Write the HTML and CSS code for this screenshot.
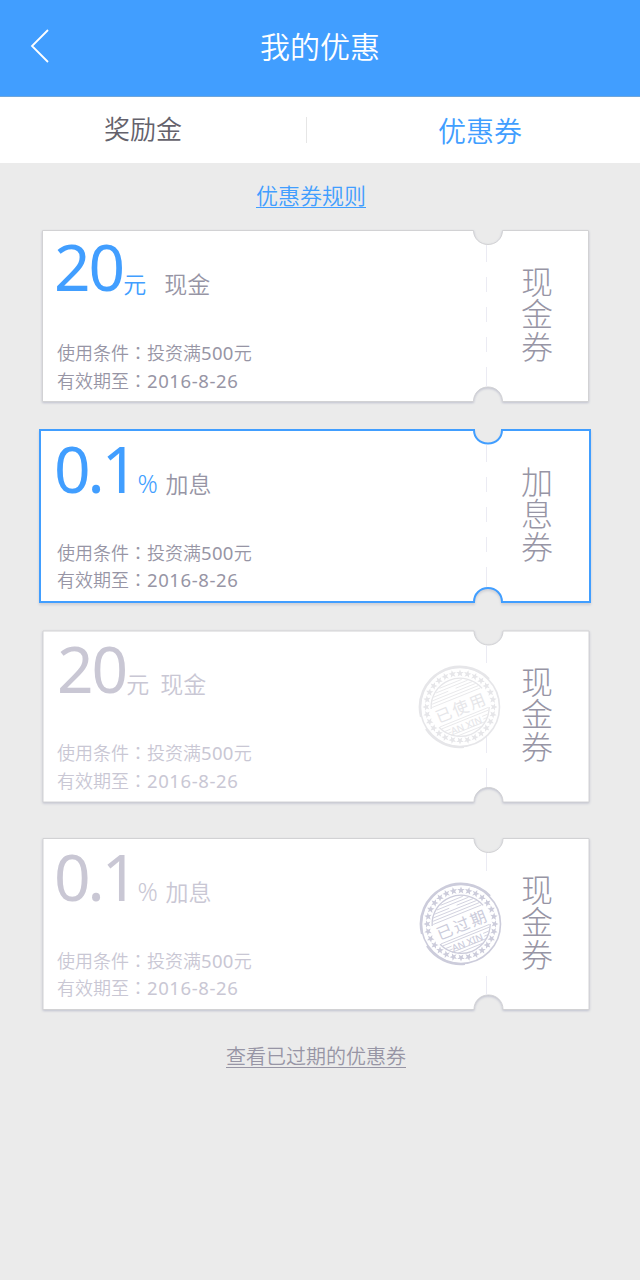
FILE: index.html
```html
<!DOCTYPE html>
<html lang="zh-CN">
<head>
<meta charset="utf-8">
<title>我的优惠</title>
<link rel="stylesheet" href="styles.css">
</head>
<body>
<svg class="defs" width="0" height="0">
  <defs>
    <path id="ticket" d="M6.5 5.500H437.500C437.500 13.500 444 19.500 452 19.500S466.500 13.500 466.500 5.500H552.500V176.500H466.500C466.500 168 460 162 452 162S437.500 168 437.500 176.500H6.500Z"/>
    <path id="star" d="M0-37.600l1 2.500 2.800.1-2.200 1.700.8 2.700-2.400-1.500-2.400 1.500.8-2.700-2.200-1.700 2.800-.1Z"/>
    <g id="star4"><use href="#star"/><use href="#star" transform="rotate(12.857)"/><use href="#star" transform="rotate(25.714)"/><use href="#star" transform="rotate(38.571)"/></g>
    <g id="seal">
      <circle r="39.500" fill="none" stroke="currentColor" stroke-width="1.600"/>
      <path d="M-39 10A40.300 40.300 0 0 1 29-28M-34 22A40.300 40.300 0 0 0 4 40" fill="none" stroke="currentColor" stroke-width="2.200"/>
      <g fill="currentColor"><use href="#star4"/><use href="#star4" transform="rotate(51.429)"/><use href="#star4" transform="rotate(102.857)"/><use href="#star4" transform="rotate(154.286)"/><use href="#star4" transform="rotate(205.714)"/><use href="#star4" transform="rotate(257.143)"/><use href="#star4" transform="rotate(308.571)"/></g>
      <g transform="rotate(-22)" fill="none" stroke="currentColor">
        <path d="M-27.500-9A29 29 0 0 1 27.500-9M-27 11A29 29 0 0 0 27 11" stroke-width="1.300"/>
        <path d="M-26-10H26M-25-13H25M-23.500-16H23.500M-21-19H-5M3-19H21M-17-22H17M-12-25H12M-26 11H26M-25 13.500H25M-23 17H-17M17 17H23M-21 20H-17M17 20H21M-19 23H19M-14 26H14" stroke-width=".8"/>
      </g>
    </g>
  </defs>
</svg>

<header class="topbar">
  <a class="back"><svg width="20" height="34" viewBox="0 0 20 34"><path d="M18 1L2 17L18 33" fill="none" stroke="#fff" stroke-width="1.800"/></svg></a>
  <h1 class="title">我的优惠</h1>
</header>
<nav class="tabs">
  <a class="tab">奖励金</a>
  <a class="tab tab-active">优惠券</a>
</nav>

<main class="content">
  <a class="rules">优惠券规则</a>

  <section class="coupon cash">
    <svg class="shape" viewBox="0 0 560 184"><use class="outline" href="#ticket"/><path class="dash" d="M450.500 20V162"/></svg>
    <div class="info">
      <div class="price"><b class="num">20</b><span class="unit">元</span><span class="kind kind-cash">现金</span></div>
      <p class="line">使用条件<i lang="zh-Hant">：</i>投资满<em>500</em>元</p>
      <p class="line">有效期至<i lang="zh-Hant">：</i><em class="date">2016-8-26</em></p>
    </div>
    <div class="stub">现金券</div>
  </section>

  <section class="coupon selected">
    <svg class="shape" viewBox="0 0 560 184"><path class="outline" d="M4 5H438C438 13 444 18.500 452 18.500S466 13 466 5H554V177H466C466 169 460 163 452 163S438 169 438 177H4Z"/><path class="dash" d="M450.500 20V162"/></svg>
    <div class="info">
      <div class="price"><b class="num rate">0.1</b><span class="unit percent">%</span><span class="kind">加息</span></div>
      <p class="line">使用条件<i lang="zh-Hant">：</i>投资满<em>500</em>元</p>
      <p class="line">有效期至<i lang="zh-Hant">：</i><em class="date">2016-8-26</em></p>
    </div>
    <div class="stub">加息券</div>
  </section>

  <section class="coupon disabled used">
    <svg class="shape" viewBox="0 0 560 184"><use class="outline" href="#ticket" x=".5" y=".5"/><path class="dash" d="M450.500 20V38M450.500 112V128M450.500 143V162"/></svg>
    <div class="info">
      <div class="price"><b class="num">20</b><span class="unit">元</span><span class="kind kind-cash">现金</span></div>
      <p class="line">使用条件<i lang="zh-Hant">：</i>投资满<em>500</em>元</p>
      <p class="line">有效期至<i lang="zh-Hant">：</i><em class="date">2016-8-26</em></p>
    </div>
    <svg class="stamp" width="84" height="84" viewBox="-42 -42 84 84"><use href="#seal"/><g transform="rotate(-22)"><text class="stamp-text" x="1" y="7">已使用</text><text class="stamp-name" x="-1" y="23">AN XIN</text></g></svg>
    <div class="stub">现金券</div>
  </section>

  <section class="coupon disabled expired">
    <svg class="shape" viewBox="0 0 560 184"><use class="outline" href="#ticket" x=".5"/><path class="dash" d="M450.500 20V38M450.500 143V162"/></svg>
    <div class="info">
      <div class="price"><b class="num rate">0.1</b><span class="unit percent">%</span><span class="kind">加息</span></div>
      <p class="line">使用条件<i lang="zh-Hant">：</i>投资满<em>500</em>元</p>
      <p class="line">有效期至<i lang="zh-Hant">：</i><em class="date">2016-8-26</em></p>
    </div>
    <svg class="stamp" width="84" height="84" viewBox="-42 -42 84 84"><use href="#seal"/><g transform="rotate(-22)"><text class="stamp-text" x="1" y="7">已过期</text><text class="stamp-name" x="-1" y="23">AN XIN</text></g></svg>
    <div class="stub">现金券</div>
  </section>

  <a class="more">查看已过期的优惠券</a>
</main>
</body>
</html>
```

FILE: styles.css
```css
* { box-sizing: border-box; }
body {
  margin: 0;
  min-height: 1280px;
  background: #ebebeb;
  color: #9795a5;
  font-family: "Noto Sans CJK SC", sans-serif;
  font-weight: 350;
}
.defs { display: block; }

.topbar {
  display: grid;
  grid-template-columns: 60px 1fr 60px;
  align-items: center;
  height: 97px;
  padding-bottom: 5px;
  background: #419eff;
  border-bottom: 1px solid #6ea6dc;
}
.back { display: flex; padding-left: 30px; }
.title {
  margin: 0;
  color: #fff;
  font-size: 30px;
  font-weight: 350;
  line-height: 42px;
  padding-bottom: 2px;
  text-align: center;
}

.tabs { display: flex; height: 66px; background: #fff; }
.tab {
  width: 286px;
  color: #64626c;
  font-size: 26px;
  line-height: 62px;
  text-align: center;
}
.tab-active {
  flex: 1;
  margin: 20px 0;
  margin-left: 20px;
  padding-left: 13px;
  border-left: 1px solid #e6e6e6;
  color: #419eff;
  font-size: 28px;
  line-height: 26px;
}

.content { display: flex; flex-direction: column; padding: 0 44px 0 36px; }
.rules {
  height: 62px;
  padding-right: 10px;
  color: #419eff;
  font-size: 22px;
  line-height: 62px;
  text-align: center;
  text-decoration: underline;
  text-decoration-thickness: 1px;
  text-underline-offset: 3px;
}

.coupon {
  display: grid;
  grid-template-columns: 382px 84px 1fr;
  height: 184px;
  margin-bottom: 16px;
}
.shape {
  grid-area: 1 / 1 / 2 / 4;
  width: 560px;
  height: 184px;
  filter: drop-shadow(0 1px 1px #bfc1cf);
}
.outline { fill: #fff; stroke: #d2d2d4; }
.dash { fill: none; stroke: #ebebf3; stroke-dasharray: 17 15 15 15 15 15 15 15 20; }
.selected .outline { stroke: #419eff; stroke-width: 2; }
.selected .shape { filter: drop-shadow(0 2px 1px #cfd0d6); }
.disabled .dash { stroke-dasharray: none; }

.info, .stub, .stamp { z-index: 1; }
.info { grid-area: 1 / 1 / 2 / 2; padding: 12px 0 0 18px; }
.price {
  display: flex;
  align-items: baseline;
  height: 101px;
  color: #419eff;
  line-height: 64px;
}
.num {
  font-family: "Noto Sans", sans-serif;
  font-size: 64px;
  font-weight: 400;
  letter-spacing: -2px;
}
.rate { letter-spacing: -3px; }
.cash .num { transform: translateY(-2px); }
.unit { font-size: 23px; }
.percent {
  width: 28px;
  margin-left: 2px;
  font-family: "Noto Sans", sans-serif;
  font-size: 25px;
}
.kind { color: #9795a5; font-size: 23px; }
.kind-cash { margin-left: 18px; }
.line {
  height: 28px;
  margin: 0 0 0 3px;
  font-size: 18px;
  line-height: 28px;
  white-space: nowrap;
}
.line i { font-family: "Noto Sans CJK TC", sans-serif; font-style: normal; }
.line em {
  font-family: "Noto Sans", sans-serif;
  font-size: 18.5px;
  font-style: normal;
  font-weight: 400;
  letter-spacing: .3px;
  line-height: 1;
}
.line .date { letter-spacing: .6px; }
.selected .line + .line, .expired .line + .line { margin-top: -1px; }
.disabled .price, .disabled .kind, .disabled .line { color: #c9c7d4; }
.used .info { padding-left: 21px; }
.used .kind { margin-left: 11px; }
.used .line { margin-left: 0; }

.stub {
  grid-area: 1 / 3 / 2 / 4;
  width: 33px;
  margin-left: 19px;
  padding-top: 39px;
  font-size: 32px;
  line-height: 32.300px;
  font-weight: 300;
}
.stamp { grid-area: 1 / 2 / 2 / 3; margin: 40px 0 0 1px; color: #ccccdb; }
.used .stamp { margin-left: 0; color: #e6e6e9; }
.used { margin-bottom: 24px; }
.expired .stamp { margin-top: 49px; }
.stamp-text {
  fill: currentColor;
  font-family: "Noto Sans CJK SC", sans-serif;
  font-size: 16px;
  font-weight: 400;
  letter-spacing: 2px;
  text-anchor: middle;
}
.stamp-name {
  fill: currentColor;
  font-family: "Noto Sans", sans-serif;
  font-size: 9.500px;
  font-weight: 500;
  text-anchor: middle;
}
.more {
  font-size: 20px;
  line-height: 46px;
  text-align: center;
  text-decoration: underline;
  text-decoration-thickness: 1px;
  text-underline-offset: 3px;
}
```
